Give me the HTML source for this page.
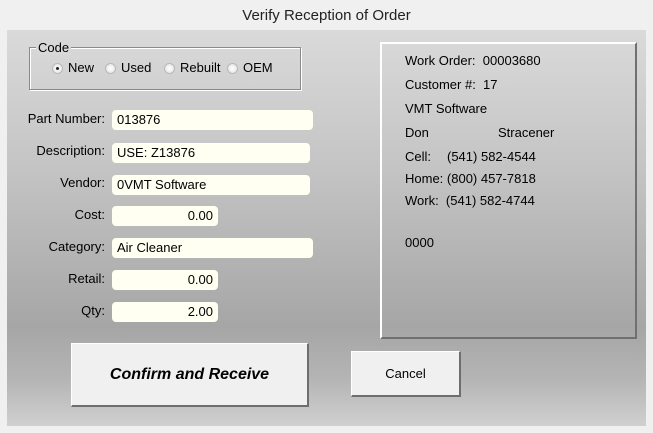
<!DOCTYPE html>
<html><head><meta charset="utf-8"><style>
*{margin:0;padding:0;box-sizing:border-box}
body{width:653px;height:433px;background:#f0f0f0;font-family:"Liberation Sans",Arial,sans-serif;font-size:13px;color:#000;position:relative;overflow:hidden}
.a{position:absolute}
.title{left:0;top:7px;width:653px;text-align:center;font-size:15px;color:#222}
.panel{left:7px;top:30px;width:639px;height:396px;background:linear-gradient(#dadada 0%,#c4c4c4 35%,#a6a6a6 75%,#b4b4b4 88%,#d0d0d0 100%)}
.grp{left:29px;top:47px;width:272px;height:43px;border:1px solid #8a8a8a;box-shadow:1px 1px 0 #fff inset,1px 1px 0 #fff}
.lg{left:36px;top:40px;background:#d8d8d8;padding:0 2px}
.rad{width:11px;height:11px;border-radius:50%;border:1px solid #b8b8b8;background:radial-gradient(#fff,#e0e0e0)}
.dot{left:3px;top:3px;width:3px;height:3px;background:#222;border-radius:50%}
.lbl{text-align:right;width:100px;left:5px}
.in{background:#fffff2;border-radius:4px;height:20px;line-height:20px;padding:0 5px}
.r{text-align:right}
.info{left:380px;top:42px;width:257px;height:297px;border-top:2px solid #fff;border-left:2px solid #fff;border-right:2px solid #707070;border-bottom:2px solid #707070}
.btn{background:#f0f0f0;border-top:1px solid #fff;border-left:1px solid #fff;border-right:2px solid #6e6e6e;border-bottom:2px solid #6e6e6e;text-align:center}
</style></head><body>
<div class="a title">Verify Reception of Order</div>
<div class="a panel"></div>
<div class="a grp"></div>
<div class="a lg">Code</div>
<div class="a rad" style="left:52px;top:63px"><div class="a dot"></div></div>
<div class="a" style="left:68px;top:60px">New</div>
<div class="a rad" style="left:105px;top:63px"></div>
<div class="a" style="left:121px;top:60px">Used</div>
<div class="a rad" style="left:164px;top:63px"></div>
<div class="a" style="left:180px;top:60px">Rebuilt</div>
<div class="a rad" style="left:227px;top:63px"></div>
<div class="a" style="left:243px;top:60px">OEM</div>

<div class="a lbl" style="top:111px">Part Number:</div>
<div class="a in" style="left:112px;top:110px;width:201px">013876</div>
<div class="a lbl" style="top:143px">Description:</div>
<div class="a in" style="left:112px;top:143px;width:198px">USE: Z13876</div>
<div class="a lbl" style="top:175px">Vendor:</div>
<div class="a in" style="left:112px;top:175px;width:198px">0VMT Software</div>
<div class="a lbl" style="top:207px">Cost:</div>
<div class="a in r" style="left:112px;top:206px;width:106px">0.00</div>
<div class="a lbl" style="top:239px">Category:</div>
<div class="a in" style="left:112px;top:238px;width:201px">Air Cleaner</div>
<div class="a lbl" style="top:271px">Retail:</div>
<div class="a in r" style="left:112px;top:270px;width:106px">0.00</div>
<div class="a lbl" style="top:303px">Qty:</div>
<div class="a in r" style="left:112px;top:302px;width:106px">2.00</div>

<div class="a info"></div>
<div class="a" style="left:405px;top:53px">Work Order:&nbsp; 00003680</div>
<div class="a" style="left:405px;top:77px">Customer #:&nbsp; 17</div>
<div class="a" style="left:405px;top:101px">VMT Software</div>
<div class="a" style="left:405px;top:125px">Don</div>
<div class="a" style="left:498px;top:125px">Stracener</div>
<div class="a" style="left:405px;top:149px">Cell:</div>
<div class="a" style="left:447px;top:149px">(541) 582-4544</div>
<div class="a" style="left:405px;top:171px">Home: (800) 457-7818</div>
<div class="a" style="left:405px;top:193px">Work:&nbsp; (541) 582-4744</div>
<div class="a" style="left:405px;top:235px">0000</div>

<div class="a btn" style="left:71px;top:343px;width:238px;height:64px;line-height:61px;font-size:16px;font-weight:bold;font-style:italic">Confirm and Receive</div>
<div class="a btn" style="left:351px;top:351px;width:110px;height:46px;line-height:44px">Cancel</div>
</body></html>
